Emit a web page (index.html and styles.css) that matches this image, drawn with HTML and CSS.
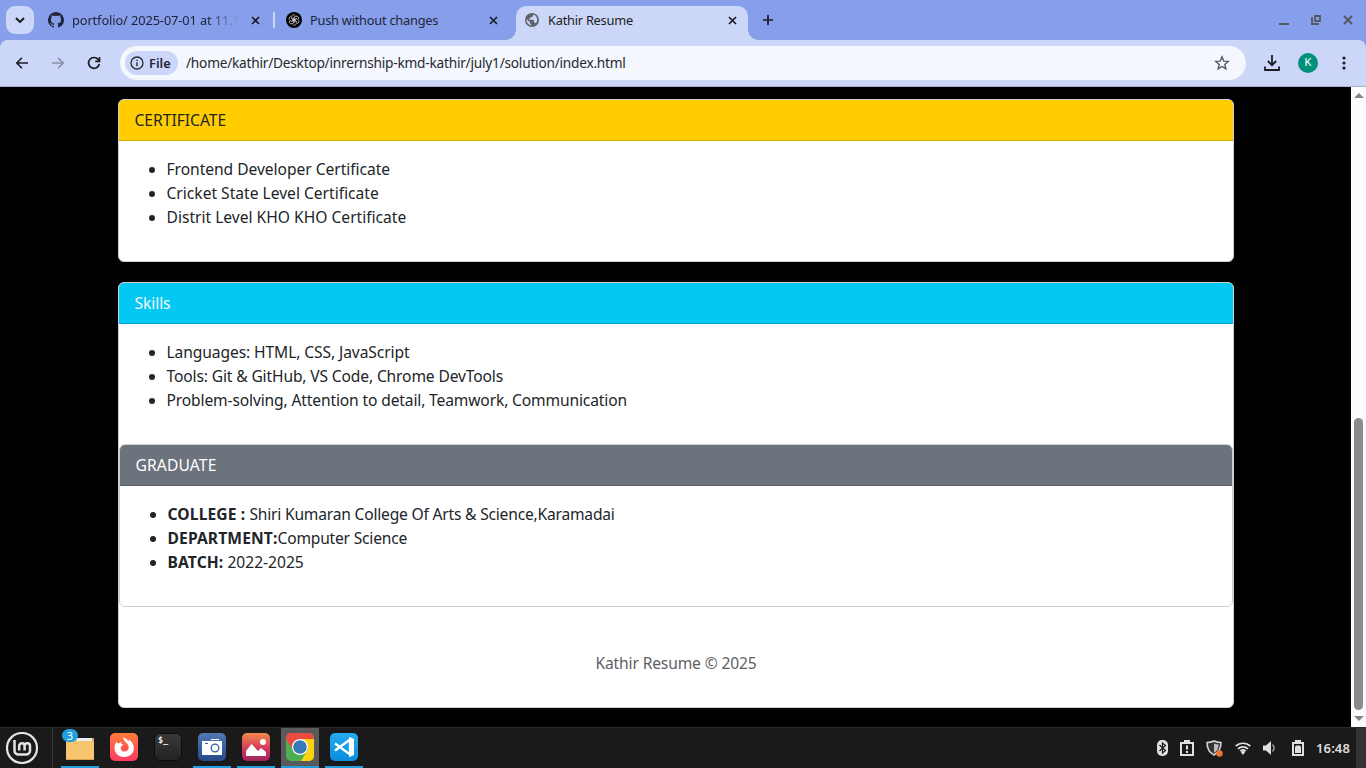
FILE: index.html
```html
<!DOCTYPE html>
<html lang="en">
<head>
<meta charset="utf-8">
<title>Kathir Resume</title>
<link rel="stylesheet" href="styles.css">
</head>
<body>
<div class="screen">
  <header class="tabstrip">
    <div class="tab-search"><svg width="10" height="6" viewBox="0 0 10 6"><path d="M1 1l4 4 4-4" fill="none" stroke="#1c1d22" stroke-width="2"/></svg></div>
    <div class="tab tab-one">
      <svg width="16" height="16" viewBox="0 0 16 16"><path fill="#202638" d="M8 0a8 8 0 0 0-2.500 15.600c.4.100.5-.2.500-.4v-1.400c-2.200.5-2.700-1-2.700-1-.4-.9-.9-1.200-.9-1.200-.7-.5.100-.5.100-.5.8.100 1.200.8 1.200.8.700 1.200 1.900.9 2.300.7.100-.5.300-.9.500-1.100-1.800-.2-3.600-.9-3.600-4 0-.9.300-1.600.8-2.100-.1-.2-.4-1 .1-2.100 0 0 .7-.2 2.200.8a7.500 7.500 0 0 1 4 0c1.500-1 2.200-.8 2.200-.8.4 1.100.2 1.900.1 2.100.5.6.8 1.300.8 2.100 0 3.100-1.900 3.700-3.700 3.900.3.300.6.800.6 1.500v2.300c0 .2.100.5.500.400A8 8 0 0 0 8 0z"/></svg>
      <span class="tab-title fade">portfolio/ 2025-07-01 at 11.1</span>
      <svg class="close" width="9" height="9" viewBox="0 0 9 9"><path d="M1 1l7 7M8 1L1 8" stroke="#1c1d22" stroke-width="1.700"/></svg>
    </div>
    <i class="tab-divider"></i>
    <div class="tab tab-two">
      <svg width="16" height="16" viewBox="0 0 16 16"><circle cx="8" cy="8" r="8"/><g fill="none" stroke="#ddd" stroke-width=".7"><path id="petal" d="M5.700 6.700V4.600a2 2 0 0 1 3.700-.9M5.700 6.700l2.300 1.400 2.700-1.600"/><use href="#petal" transform="rotate(60 8 8)"/><use href="#petal" transform="rotate(120 8 8)"/><use href="#petal" transform="rotate(180 8 8)"/><use href="#petal" transform="rotate(240 8 8)"/><use href="#petal" transform="rotate(300 8 8)"/></g></svg>
      <span class="tab-title">Push without changes</span>
      <svg class="close" width="9" height="9" viewBox="0 0 9 9"><path d="M1 1l7 7M8 1L1 8" stroke="#1c1d22" stroke-width="1.700"/></svg>
    </div>
    <div class="tab tab-active">
      <svg width="14" height="14" viewBox="0 0 14 14"><circle cx="7" cy="7" r="7" fill="#5f6368"/><path fill="#cbd6f8" d="M8.200 1.500v1.100c0 .8-.6 1.400-1.400 1.400H5.500v1.400H4.100v1.300h4.100c.4 0 .7.300.7.700v2h.7c.6 0 1.100.4 1.300.9A5.500 5.500 0 0 0 8.200 1.500zM1.600 6.200l3.500 3.300v.7c0 .7.600 1.300 1.300 1.300v1A5.500 5.500 0 0 1 1.600 6.200z"/></svg>
      <span class="tab-title">Kathir Resume</span>
      <svg class="close" width="9" height="9" viewBox="0 0 9 9"><path d="M1 1l7 7M8 1L1 8" stroke="#1c1d22" stroke-width="1.700"/></svg>
    </div>
    <svg class="new-tab" width="10" height="10" viewBox="0 0 10 10"><path d="M5 0v10M0 5h10" stroke="#1c1d22" stroke-width="1.700"/></svg>
    <div class="window-buttons">
      <svg width="10" height="12" viewBox="0 0 10 12"><path d="M0 9h10" stroke="#56585f" stroke-width="2"/></svg>
      <svg width="10" height="10" viewBox="0 0 10 10"><path d="M4 1h5v5H4zM1 2v7h7" fill="none" stroke="#56585f" stroke-width="1.800"/></svg>
      <svg width="10" height="10" viewBox="0 0 10 10"><path d="M1 1l8 8M9 1L1 9" stroke="#56585f" stroke-width="2"/></svg>
    </div>
  </header>

  <nav class="toolbar">
    <svg class="nav-icon" width="16" height="16" viewBox="0 0 16 16"><path d="M14 8H3M8 2.800L2.800 8 8 13.200" fill="none" stroke="#1c1d22" stroke-width="1.600"/></svg>
    <svg class="nav-icon" width="16" height="16" viewBox="0 0 16 16"><path d="M2 8h11M8 2.800L13.200 8 8 13.200" fill="none" stroke="#8990a6" stroke-width="1.600"/></svg>
    <svg class="nav-icon" width="16" height="16" viewBox="0 0 16 16"><path d="M13.300 9A5.400 5.400 0 1 1 12.200 4.500L13.500 6M13.500 2v4.300H9.200" fill="none" stroke="#1c1d22" stroke-width="1.700"/></svg>
    <div class="omnibox">
      <div class="chip">
        <svg width="14" height="14" viewBox="0 0 14 14"><circle cx="7" cy="7" r="6" fill="none" stroke="#2a2c33" stroke-width="1.300"/><path d="M7 6.200v4M7 3.700v1.400" stroke="#2a2c33" stroke-width="1.400"/></svg>
        <b>File</b>
      </div>
      <span class="url">/home/kathir/Desktop/inrernship-kmd-kathir/july1/solution/index.html</span>
      <svg class="star" width="16" height="16" viewBox="0 0 16 16"><path d="M8 1.800l1.700 4.300 4.600.3-3.500 3 1.100 4.500L8 11.400l-3.900 2.500 1.100-4.500-3.500-3 4.600-.3z" fill="none" stroke="#50535b" stroke-width="1.300"/></svg>
    </div>
    <svg class="download" width="16" height="16" viewBox="0 0 16 16"><path d="M8 0v10M3.800 6L8 10.200 12.200 6M1 11.500V15h14v-3.500" fill="none" stroke="#1c1d22" stroke-width="1.800"/></svg>
    <span class="avatar">K</span>
    <svg class="menu" width="4" height="14" viewBox="0 0 4 14"><g fill="#1c1d22"><circle cx="2" cy="2" r="1.600"/><circle cx="2" cy="7" r="1.600"/><circle cx="2" cy="12" r="1.600"/></g></svg>
  </nav>

  <div class="viewport">
    <main class="page">
      <section class="card">
        <h2 class="card-header yellow">CERTIFICATE</h2>
        <ul class="card-list">
          <li class="snug">Frontend Developer Certificate</li>
          <li>Cricket State Level Certificate</li>
          <li>Distrit Level KHO KHO Certificate</li>
        </ul>
      </section>
      <section class="card">
        <h2 class="card-header cyan">Skills</h2>
        <ul class="card-list">
          <li class="tight">Languages: HTML, CSS, JavaScript</li>
          <li class="tighter">Tools: Git &amp; GitHub, VS Code, Chrome DevTools</li>
          <li class="tighter">Problem-solving, Attention to detail, Teamwork, Communication</li>
        </ul>
        <section class="card nested">
          <h2 class="card-header gray">GRADUATE</h2>
          <ul class="card-list">
            <li><b>COLLEGE :</b> <span class="tightest">Shiri Kumaran College Of Arts &amp; Science,Karamadai</span></li>
            <li><b>DEPARTMENT:</b><span class="tightest">Computer Science</span></li>
            <li><b>BATCH:</b> 2022-2025</li>
          </ul>
        </section>
        <footer class="page-footer">Kathir Resume © 2025</footer>
      </section>
    </main>
    <div class="scrollbar"><i class="arrow-up"></i><i class="thumb"></i><i class="arrow-down"></i></div>
  </div>

  <footer class="taskbar">
    <div class="mint"><svg width="32" height="32" viewBox="0 0 32 32"><circle cx="16" cy="16" r="15" fill="none" stroke="#e4e4e4" stroke-width="2.200"/><path d="M8.500 8v10.500a4 4 0 0 0 4 4h7.500a4 4 0 0 0 4-4V14a2.700 2.700 0 0 0-5.400 0v4.500M18.600 14a2.700 2.700 0 0 0-5.400 0v4.500" fill="none" stroke="#e4e4e4" stroke-width="2.500"/></svg></div>
    <div class="apps">
      <div class="app open"><svg width="28" height="28" viewBox="0 0 28 28"><path d="M0 3h9l2 2h17v22H0z" fill="#d7a253"/><path d="M3 5h23v4H3z" fill="#eee"/><path d="M0 7h9l3 1h16v18H0z" fill="#f7c470"/></svg><span class="badge">3</span></div>
      <div class="app"><svg width="28" height="28" viewBox="0 0 28 28"><defs><linearGradient id="ff" x2="0" y2="1"><stop stop-color="#ff7b3a"/><stop offset="1" stop-color="#ff3c62"/></linearGradient></defs><rect width="28" height="28" rx="5" fill="url(#ff)"/><path d="M13 4.500c3 .5 4.500 2 5 3.500 1-.3 1-1.500 1-1.500 4 3 5.500 7 4.500 11-1 4-5 6.500-9.500 6.500S4.500 20.500 4.500 15.500c0-3 1-5.500 2.500-7 0 1 .3 1.700 1 2 1-.6 2-.5 3-1.500l.5 2 2 .5-2.500 2c-1 3 1 5 3.500 5 3 0 5-3 3.800-6C17.300 9.500 13.500 8.500 13 4.500z" fill="#fff"/></svg></div>
      <div class="app"><svg width="28" height="28" viewBox="0 0 28 28"><defs><linearGradient id="tm" x2="0" y2="1"><stop stop-color="#393939"/><stop offset="1" stop-color="#222"/></linearGradient></defs><rect x=".5" y=".5" width="27" height="27" rx="5" fill="url(#tm)" stroke="#0b0b0b"/><text x="4" y="9.500" class="term">$_</text></svg></div>
      <div class="app open"><svg width="28" height="28" viewBox="0 0 28 28"><defs><linearGradient id="cm" x2="0" y2="1"><stop stop-color="#5278b5"/><stop offset="1" stop-color="#264a89"/></linearGradient></defs><rect width="28" height="28" rx="5" fill="url(#cm)"/><path d="M4 8h20v14H4zM13 6h8v1h-8z" fill="#fff"/><circle cx="17" cy="15" r="3.800" fill="#fff" stroke="#365b99" stroke-width="1.300"/><path d="M7 10.500h3" stroke="#365b99"/></svg></div>
      <div class="app open"><svg width="28" height="28" viewBox="0 0 28 28"><defs><linearGradient id="im" x2="0" y2="1"><stop stop-color="#f58a4d"/><stop offset=".55" stop-color="#d33a5c"/><stop offset="1" stop-color="#a22363"/></linearGradient></defs><rect width="28" height="28" rx="5" fill="url(#im)"/><circle cx="21" cy="9" r="3" fill="#fff"/><path d="M4 23v-5l5.500-7 6.500 7 3-3 5 4v4z" fill="#fff"/></svg></div>
      <div class="app open focused"><svg width="28" height="28" viewBox="0 0 28 28"><defs><clipPath id="cc"><rect width="28" height="28" rx="5"/></clipPath></defs><g clip-path="url(#cc)"><path d="M0 0h28v28H0z" fill="#4caf50"/><path d="M0 0h28v7H14l-7 10L0 6z" fill="#ea4a3f"/><path d="M14 6h14v22H15l7-12z" fill="#fbd30c"/></g><circle cx="14" cy="14" r="8" fill="#fff"/><circle cx="14" cy="14" r="6.800" fill="#3978b8"/></svg></div>
      <div class="app open"><svg width="28" height="28" viewBox="0 0 28 28"><defs><linearGradient id="vs" x2="0" y2="1"><stop stop-color="#26aaf0"/><stop offset="1" stop-color="#0b8ddd"/></linearGradient></defs><rect width="28" height="28" rx="5" fill="url(#vs)"/><path d="M5 10.500l15 11V6.500l-15 11" fill="none" stroke="#fff" stroke-width="2.400"/><path d="M19 4l5 2v16l-5 2z" fill="#fff"/></svg></div>
    </div>
    <div class="tray">
      <svg width="11" height="16" viewBox="0 0 11 16"><rect width="11" height="16" rx="5" fill="#e0e0e0"/><path d="M2.500 5l6 5.500-3 2.500V3l3 2.500-6 5.500" fill="none" stroke="#1a1a1a" stroke-width="1.200"/></svg>
      <svg width="14" height="16" viewBox="0 0 14 16"><path d="M1 3h12v12H1z" fill="none" stroke="#e0e0e0" stroke-width="2"/><path d="M4 0h6v4H4z" fill="#e0e0e0"/><path d="M7 5.500v4M7 11v2" stroke="#e0e0e0" stroke-width="2"/></svg>
      <svg width="17" height="17" viewBox="0 0 17 17"><path d="M1 2.500Q5 2.500 8 1q3 1.500 7 1.500 0 9-7 12.500Q1 11.500 1 2.500z" fill="#333" stroke="#d5d5d5" stroke-width="1.500"/><path d="M8 3.500q2.500 1 4.700 1Q12.500 10.500 8 13z" fill="#bbb"/><circle cx="13.500" cy="13.500" r="3.200" fill="#f37336"/></svg>
      <svg width="16" height="14" viewBox="0 0 16 14"><path d="M.7 5.200a10.500 10.500 0 0 1 14.600 0M3 7.800a7.200 7.200 0 0 1 10 0M5.300 10.200a4 4 0 0 1 5.400 0" fill="none" stroke="#e0e0e0" stroke-width="1.700"/><path d="M5.800 11L8 14l2.200-3a3 3 0 0 0-4.400 0z" fill="#e0e0e0"/></svg>
      <svg width="13" height="14" viewBox="0 0 13 14"><path d="M0 4.500h3L8 0v14L3 9.500H0z" fill="#e0e0e0"/><path d="M9.500 3.500q3 3.500 0 7" fill="none" stroke="#999" stroke-width="1.500"/></svg>
      <svg class="battery" width="12" height="16" viewBox="0 0 12 16"><path d="M0 2h3V0h6v2h3v14H0z" fill="#e0e0e0"/><path d="M2 4h8v10H2z" fill="#1a1a1a"/><path d="M3 7l1-1.500h4L9 7v6H3z" fill="#e0e0e0"/></svg>
      <span class="clock">16:48</span>
      <i class="show-desktop"></i>
    </div>
  </footer>
</div>
</body>
</html>
```
FILE: styles.css
```css
* { box-sizing: border-box; }
body { margin: 0; font-family: "Noto Sans", "Open Sans", sans-serif; }
svg { display: block; flex: none; }
.screen { width: 1366px; height: 768px; display: flex; flex-direction: column; overflow: hidden; background: #000; }

.tabstrip { height: 40px; flex: none; display: flex; background: #879eeb; padding: 0 14px 0 6px; }
.tab-search { width: 28px; height: 28px; margin-top: 6px; border-radius: 9px; background: #cbd6f8; display: grid; place-items: center; }
.tab { height: 40px; display: flex; align-items: center; font-size: 12.8px; letter-spacing: -0.235px; color: #202638; white-space: nowrap; }
.tab-title { flex: 1; }
.tab-one { width: 225px; margin-left: 14px; gap: 8px; }
.tab-two { width: 212px; margin-left: 11px; gap: 8px; }
.tab-one .tab-title { flex: 0 0 168px; margin-right: 3px; letter-spacing: -0.1px; }
.fade { mask-image: linear-gradient(90deg, #000 80%, transparent); }
.tab-divider { width: 2px; height: 16px; background: #cbd6f8; margin-top: 12px; }
.tab-active { position: relative; width: 232px; height: 34px; margin: 6px 0 0 18px; padding: 0 11px 6px 9px; gap: 9px; border-radius: 10px 10px 0 0; background: #cbd6f8; color: #1c1d22; }
.tab-active::before, .tab-active::after { content: ""; position: absolute; bottom: 0; width: 10px; height: 10px; }
.tab-active::before { left: -10px; background: radial-gradient(circle at 0 0, transparent 9.500px, #cbd6f8 10px); }
.tab-active::after { right: -10px; background: radial-gradient(circle at 100% 0, transparent 9.500px, #cbd6f8 10px); }
.new-tab { margin: 15px 0 0 15px; }
.window-buttons { margin-left: auto; display: flex; gap: 22px; padding-top: 15px; margin-right: -1px; }

.toolbar { height: 47px; flex: none; display: flex; align-items: center; background: radial-gradient(circle at 7px 7px, #cbd6f8 6.500px, #879eeb 7px) 0 0 / 7px 7px no-repeat, radial-gradient(circle at 0 7px, #cbd6f8 6.500px, #879eeb 7px) 100% 0 / 7px 7px no-repeat, #cbd6f8; border-bottom: 1px solid #a5afcf; padding: 0 20px 0 14px; }
.nav-icon { margin-right: 20px; }
.omnibox { width: 1126px; height: 34px; margin-left: -2px; border-radius: 17px; background: #f4f7fe; display: flex; align-items: center; padding: 0 16px 0 5px; }
.chip { width: 53px; height: 24px; border-radius: 12px; background: #cbd6f8; display: flex; align-items: center; gap: 5px; padding-left: 5px; font-size: 12.800px; color: #202638; }
.chip b { font-weight: 600; }
.url { margin: -2px 0 0 8px; font-size: 13.700px; letter-spacing: -0.235px; color: #27292f; white-space: nowrap; }
.star { margin-left: auto; }
.download { margin-left: 18px; }
.avatar { width: 20px; height: 20px; margin-left: 18px; border-radius: 50%; background: #00917b; color: #fff; font: 11px/20px Roboto, sans-serif; text-align: center; }
.menu { margin-left: 24px; }

.viewport { flex: 1; min-height: 0; display: flex; }
.page { flex: 1; padding: 12px 117px 0 118px; font-size: 15.600px; line-height: 24px; color: #212529; }
.card { border: 1px solid #cfcfcf; border-radius: 6px; background: #fff; margin-bottom: 20px; }
.card-header { height: 41px; margin: 0; padding: 8px 15.500px; border-bottom: 1px solid rgba(0, 0, 0, .175); border-radius: 5px 5px 0 0; font-size: inherit; font-weight: 400; }
.yellow { background: #ffcd00; }
.cyan { background: #03c8f4; color: #f5f8f9; letter-spacing: -0.07px; }
.gray { background: #6c737c; color: #fff; letter-spacing: 0.14px; }
.card-list { margin: 0; padding: 16px 16px 32px 47.500px; }
.card-list b { font-weight: 700; letter-spacing: 0.13px; }
.snug { letter-spacing: -0.04px; }
.tight { letter-spacing: -0.094px; }
.tighter { letter-spacing: -0.14px; }
.tightest { letter-spacing: -0.2px; }
.nested { margin: 0; }
.page-footer { height: 100px; padding-top: 44px; text-align: center; color: #5c6065; letter-spacing: -0.146px; }
.scrollbar { width: 15px; background: #fcfcfc; display: flex; flex-direction: column; align-items: center; }
.arrow-up, .arrow-down { border: 5px solid transparent; }
.arrow-up { margin-top: 1px; border-bottom-color: #858585; }
.thumb { width: 9px; height: 292px; margin-top: auto; border-radius: 5px; background: #8b8b8b; }
.arrow-down { margin: 6px 0 1px; border-top-color: #858585; }

.taskbar { height: 41px; flex: none; display: flex; background: #1a1a1a; border-top: 1px solid #2a2a2a; }
.mint { width: 53px; padding: 4px 0 0 6px; border-right: 1px solid #3a3a3a; }
.apps { display: flex; gap: 6px; padding-left: 8px; }
.app { position: relative; width: 38px; height: 40px; padding: 5px; }
.open { border-bottom: 2px solid #229fe0; }
.focused { background: #5a5a5a; }
.badge { position: absolute; left: 1px; top: 1px; width: 16px; height: 13px; border-radius: 7px; background: #229fe0; color: #fff; font-size: 11px; line-height: 13px; text-align: center; }
.term { font: bold 8.500px "DejaVu Sans Mono", monospace; fill: #eee; }
.tray { margin-left: auto; display: flex; align-items: center; gap: 12px; }
.battery { margin-left: 4px; }
.clock { font-size: 13px; font-weight: 600; letter-spacing: 0.13px; color: #dedede; }
.show-desktop { width: 10px; height: 40px; margin-left: -6px; background: #333; }
```
